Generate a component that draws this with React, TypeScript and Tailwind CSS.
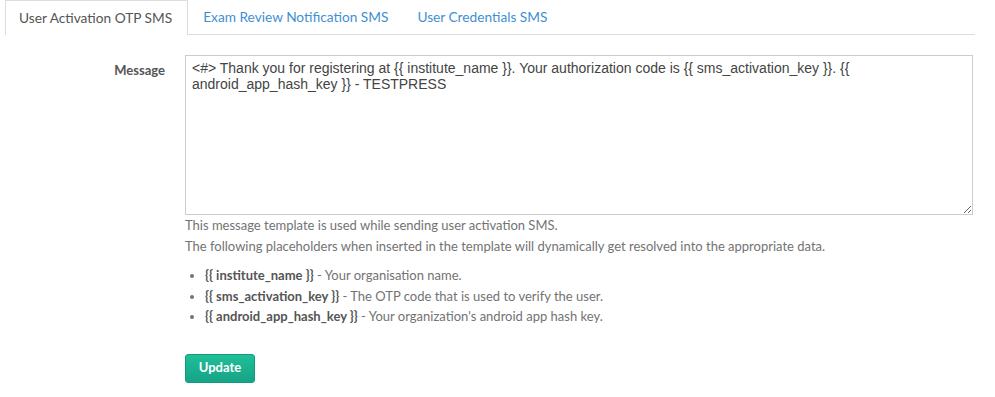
export default function App() {
  return (
    <div className="w-[995px] h-[397px] bg-white" style={{ fontFamily: "Lato, 'Noto Sans', sans-serif" }}>
      <div className="pl-[5px] pr-[20px]">
        {/* tabs */}
        <div className="flex border-b border-[#dddddd] h-[35px]">
          <div className="h-[35px] pl-[13px] pr-[15px] flex items-center border border-b-0 border-[#dddddd] bg-white text-[13.7px] text-[#555555] -mb-px">
            User Activation OTP SMS
          </div>
          <div className="h-[35px] px-[15px] flex items-center text-[13.7px] text-[#3f8fd2]">Exam Review Notification SMS</div>
          <div className="h-[35px] px-[14px] flex items-center text-[13.7px] text-[#3f8fd2]">User Credentials SMS</div>
        </div>

        {/* form */}
        <div className="flex mt-[20px]">
          <div className="w-[160px] text-right text-[13px] font-bold text-[#555555] pt-[6px]">Message</div>
          <div className="ml-[20px] w-[788px]">
            <textarea
              className="block w-[788px] h-[160px] border border-[#cccccc] px-[6px] pt-[4px] text-[14px] leading-[16px] text-[#444444] outline-none"
              style={{ fontFamily: "'Liberation Sans', Arial, sans-serif" }}
              defaultValue="<#> Thank you for registering at {{ institute_name }}. Your authorization code is {{ sms_activation_key }}. {{ android_app_hash_key }} - TESTPRESS"
            />
            <div className="text-[13px] leading-[20.5px] text-[#737373]">
              <p>This message template is used while sending user activation SMS.</p>
              <p>The following placeholders when inserted in the template will dynamically get resolved into the appropriate data.</p>
              <ul className="mt-[9px] pl-[20px] list-disc">
                <li><b className="text-[#555555]">{"{{ institute_name }}"}</b> - Your organisation name.</li>
                <li><b className="text-[#555555]">{"{{ sms_activation_key }}"}</b> - The OTP code that is used to verify the user.</li>
                <li><b className="text-[#555555]">{"{{ android_app_hash_key }}"}</b> - Your organization's android app hash key.</li>
              </ul>
            </div>
            <button className="mt-[27px] h-[29px] w-[70px] rounded-[3px] border border-[#129a7d] bg-gradient-to-b from-[#1fbf99] to-[#16a386] text-white text-[13px] font-bold">
              Update
            </button>
          </div>
        </div>
      </div>
    </div>
  );
}
